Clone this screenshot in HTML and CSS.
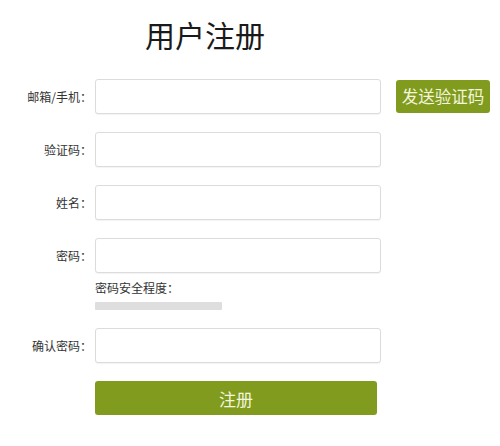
FILE: index.html
```html
<!DOCTYPE html>
<html lang="zh-CN">
<head>
<meta charset="utf-8">
<title>用户注册</title>
<link rel="stylesheet" href="styles.css">
</head>
<body>
<div class="page">
  <h1 class="title">用户注册</h1>
  <form class="form">
    <div class="row">
      <label class="label">邮箱/手机：</label>
      <input class="input" type="text">
      <button class="send-btn" type="button">发送验证码</button>
    </div>
    <div class="row row-gap">
      <label class="label">验证码：</label>
      <input class="input" type="text">
    </div>
    <div class="row row-gap">
      <label class="label">姓名：</label>
      <input class="input" type="text">
    </div>
    <div class="row row-gap">
      <label class="label">密码：</label>
      <input class="input" type="password">
    </div>
    <div class="strength">
      <div class="strength-text">密码安全程度：</div>
      <div class="strength-bar"></div>
    </div>
    <div class="row row-confirm">
      <label class="label">确认密码：</label>
      <input class="input" type="password">
    </div>
    <div class="submit-row">
      <button class="submit-btn" type="button">注册</button>
    </div>
  </form>
</div>
</body>
</html>
```

FILE: styles.css
```css
* {
  box-sizing: border-box;
}

html, body {
  margin: 0;
  padding: 0;
  background: #ffffff;
}

body {
  font-family: "Noto Sans CJK SC", "Noto Sans", sans-serif;
  color: #333333;
}

.page {
  width: 500px;
  height: 446px;
  padding-top: 13px;
}

.title {
  margin: 0 0 0 145px;
  font-size: 30px;
  line-height: 42px;
  font-weight: normal;
  color: #1a1a1a;
  height: 42px;
}

.form {
  display: flex;
  flex-direction: column;
  margin-top: 24px;
}

.row {
  display: flex;
  align-items: center;
  height: 34px;
}

.row-gap {
  margin-top: 19px;
}

.label {
  width: 95px;
  text-align: right;
  font-size: 12px;
  color: #333333;
  padding-right: 3px;
}

.input {
  width: 286px;
  height: 35px;
  border: 1px solid #dcdcdc;
  border-radius: 3px;
  background: #ffffff;
  box-shadow: 0 1px 1px rgba(0, 0, 0, 0.05);
  outline: none;
  margin: 0;
}

.send-btn {
  margin-left: 15px;
  width: 94px;
  height: 33px;
  background: #809b1e;
  border: none;
  border-radius: 3px;
  color: #f3f5dc;
  font-family: "Noto Sans CJK SC", sans-serif;
  font-size: 16.5px;
  padding: 0;
  cursor: pointer;
}

.strength {
  display: flex;
  flex-direction: column;
  padding-left: 95px;
  margin-top: 7px;
}

.strength-text {
  font-size: 12px;
  line-height: 18px;
  color: #333333;
}

.strength-bar {
  margin-top: 5px;
  width: 127px;
  height: 8px;
  background: #dedede;
  border-radius: 1px;
}

.row-confirm {
  margin-top: 18px;
}

.submit-row {
  display: flex;
  padding-left: 95px;
  margin-top: 19px;
}

.submit-btn {
  width: 282px;
  height: 34px;
  background: #809b1e;
  border: none;
  border-radius: 3px;
  color: #f3f5dc;
  font-family: "Noto Sans CJK SC", sans-serif;
  font-size: 17px;
  padding: 0;
  cursor: pointer;
}
```
